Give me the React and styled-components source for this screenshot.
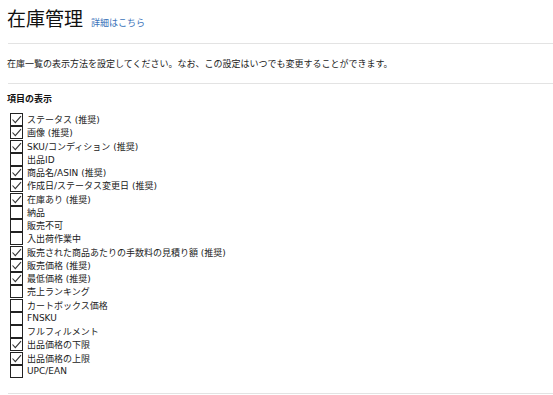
import React from 'react';
import styled, { createGlobalStyle } from 'styled-components';

const GlobalStyle = createGlobalStyle`
  html, body {
    margin: 0;
    padding: 0;
    background: #fff;
  }
  body {
    font-family: 'DejaVu Sans', 'Noto Sans CJK JP', sans-serif;
    color: #111;
    overflow: hidden;
  }
`;

const Page = styled.div`
  width: 553px;
  height: 395px;
  padding-left: 7px;
  box-sizing: border-box;
`;

const TitleRow = styled.div`
  display: flex;
  align-items: baseline;
  gap: 8px;
  height: 43px;
  padding-top: 5px;
  box-sizing: border-box;
`;

const Title = styled.h1`
  margin: 0;
  font-family: 'Noto Sans CJK JP', sans-serif;
  font-size: 19px;
  font-weight: 400;
  line-height: 26px;
  color: #111;
`;

const MoreLink = styled.a`
  font-family: 'Noto Sans CJK JP', sans-serif;
  font-size: 9px;
  color: #3b73b9;
  text-decoration: none;
  cursor: pointer;
`;

const Rule = styled.div`
  height: 1px;
  margin-left: 1px;
  background: #e3e3e3;
`;

const Intro = styled.p`
  margin: 0;
  height: 39px;
  display: flex;
  align-items: center;
  font-size: 9px;
  color: #222;
`;

const Section = styled.div`
  padding-top: 9px;
  height: 309px;
  box-sizing: border-box;
`;

const SectionTitle = styled.div`
  font-size: 9px;
  font-weight: 700;
  line-height: 13px;
  margin-bottom: 7px;
`;

const List = styled.ul`
  list-style: none;
  margin: 0;
  padding: 0 0 0 3px;
`;

const Row = styled.li`
  display: flex;
  align-items: center;
  height: 13.25px;
  font-size: 9px;
  color: #222;
`;

const Box = styled.span`
  width: 11px;
  height: 11px;
  border: 1px solid #222;
  margin-right: 4px;
  display: flex;
  align-items: center;
  justify-content: center;
  flex-shrink: 0;
  background: #fff;
`;

const Check = () => (
  <svg width="11" height="11" viewBox="0 0 11 11">
    <path d="M1.5 5.5 L4.3 8.6 L10 2.2" fill="none" stroke="#333" strokeWidth="1.1" />
  </svg>
);

const items = [
  ['ステータス (推奨)', true],
  ['画像 (推奨)', true],
  ['SKU/コンディション (推奨)', true],
  ['出品ID', false],
  ['商品名/ASIN (推奨)', true],
  ['作成日/ステータス変更日 (推奨)', true],
  ['在庫あり (推奨)', true],
  ['納品', false],
  ['販売不可', false],
  ['入出荷作業中', false],
  ['販売された商品あたりの手数料の見積り額 (推奨)', true],
  ['販売価格 (推奨)', true],
  ['最低価格 (推奨)', true],
  ['売上ランキング', false],
  ['カートボックス価格', false],
  ['FNSKU', false],
  ['フルフィルメント', false],
  ['出品価格の下限', true],
  ['出品価格の上限', true],
  ['UPC/EAN', false],
];

export default function App() {
  return (
    <>
      <GlobalStyle />
      <Page>
        <TitleRow>
          <Title>在庫管理</Title>
          <MoreLink>詳細はこちら</MoreLink>
        </TitleRow>
        <Rule />
        <Intro>在庫一覧の表示方法を設定してください。なお、この設定はいつでも変更することができます。</Intro>
        <Rule />
        <Section>
          <SectionTitle>項目の表示</SectionTitle>
          <List>
            {items.map(([label, checked]) => (
              <Row key={label}>
                <Box>{checked && <Check />}</Box>
                {label}
              </Row>
            ))}
          </List>
        </Section>
        <Rule />
      </Page>
    </>
  );
}
